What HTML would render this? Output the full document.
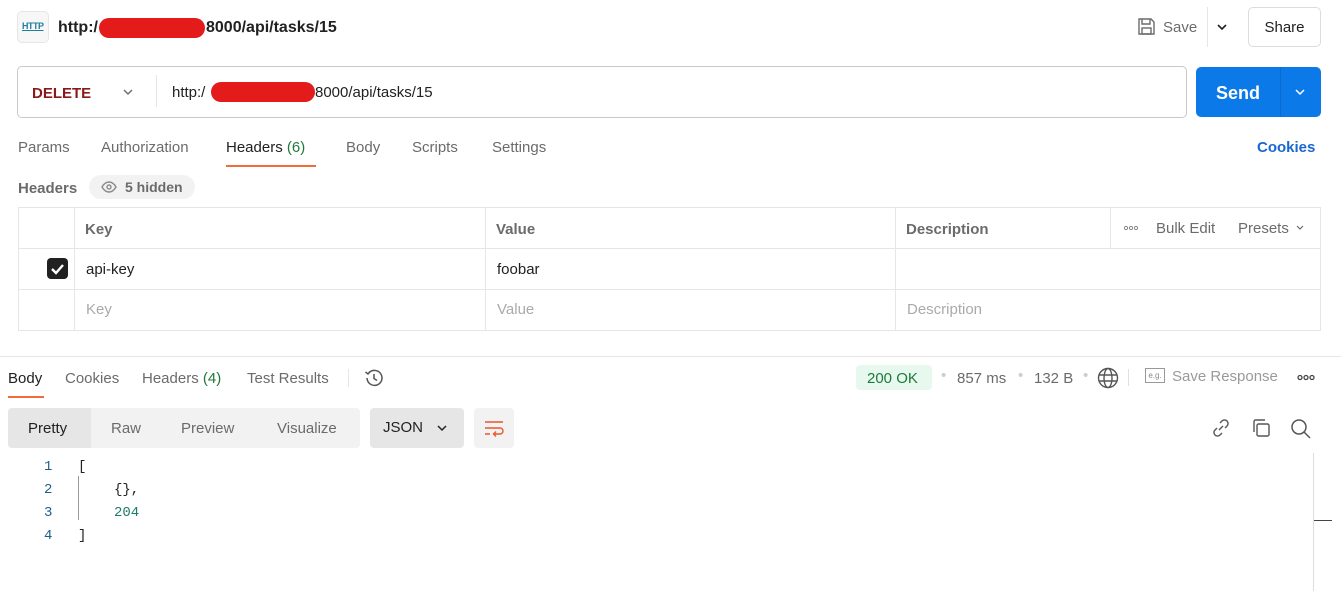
<!DOCTYPE html>
<html><head><meta charset="utf-8"><style>
*{box-sizing:border-box;margin:0;padding:0}
body{width:1341px;height:591px;background:#fff;font-family:"Liberation Sans",sans-serif;font-size:14px;color:#212121;position:relative;overflow:hidden}
.a{position:absolute;white-space:nowrap}
.g{color:#6b6b6b}
.mono{font-family:"Liberation Mono",monospace;font-size:13px}
.red{position:absolute;background:#e31b1b;border-radius:12px}
</style></head><body>
<!-- top bar -->
<div class="a" style="left:17px;top:11px;width:32px;height:32px;border:1px solid #e6e6e6;border-radius:5px;background:#f7f7f7"></div>
<div class="a" style="left:22px;top:21px;font-size:9px;font-weight:bold;color:#1f7f9e;letter-spacing:-0.5px;text-decoration:underline">HTTP</div>
<div class="a" style="left:58px;top:19px;font-size:16px;font-weight:bold">http:/</div>
<div class="a" style="left:206px;top:19px;font-size:16px;font-weight:bold">8000/api/tasks/15</div>
<div class="red" style="left:99px;top:18px;width:106px;height:20px"></div>
<svg class="a" style="left:1137px;top:17px" width="19" height="19" viewBox="0 0 19 19" fill="none" stroke="#6b6b6b" stroke-width="1.4"><path d="M2 2h12l3 3v12H2z"/><path d="M5 2v5h8V2"/><rect x="5" y="11" width="9" height="6"/></svg>
<div class="a g" style="left:1163px;top:19px;font-size:15px">Save</div>
<div class="a" style="left:1207px;top:7px;width:1px;height:40px;background:#e6e6e6"></div>
<svg class="a" style="left:1216px;top:22px" width="12" height="10" viewBox="0 0 12 10" fill="none" stroke="#212121" stroke-width="1.6"><path d="M2 3l4 4 4-4"/></svg>
<div class="a" style="left:1248px;top:7px;width:73px;height:40px;border:1px solid #dcdcdc;border-radius:5px;text-align:center;line-height:40px;font-size:15px">Share</div>
<!-- url bar -->
<div class="a" style="left:17px;top:66px;width:1170px;height:52px;border:1px solid #c8c8c8;border-radius:5px"></div>
<div class="a" style="left:32px;top:85px;font-size:15px;font-weight:bold;color:#8a1a1a">DELETE</div>
<svg class="a" style="left:122px;top:87px" width="12" height="10" viewBox="0 0 12 10" fill="none" stroke="#6b6b6b" stroke-width="1.4"><path d="M2 3l4 4 4-4"/></svg>
<div class="a" style="left:156px;top:75px;width:1px;height:32px;background:#e6e6e6"></div>
<div class="a" style="left:172px;top:84px;font-size:15px">http:/</div>
<div class="a" style="left:315px;top:84px;font-size:15px">8000/api/tasks/15</div>
<div class="red" style="left:211px;top:82px;width:104px;height:20px"></div>
<div class="a" style="left:1196px;top:67px;width:125px;height:50px;background:#0b7ae8;border-radius:5px"></div>
<div class="a" style="left:1280px;top:67px;width:1px;height:50px;background:#0a6bcc"></div>
<div class="a" style="left:1216px;top:83px;font-size:18px;font-weight:bold;color:#fff">Send</div>
<svg class="a" style="left:1294px;top:87px" width="12" height="10" viewBox="0 0 12 10" fill="none" stroke="#fff" stroke-width="1.5"><path d="M2 3l4 4 4-4"/></svg>
<!-- tabs -->
<div class="a g" style="left:18px;top:139px;font-size:15px">Params</div>
<div class="a g" style="left:101px;top:139px;font-size:15px">Authorization</div>
<div class="a" style="left:226px;top:139px;font-size:15px">Headers <span style="color:#1e7a3a">(6)</span></div>
<div class="a" style="left:226px;top:165px;width:90px;height:2px;background:#f26b3a"></div>
<div class="a g" style="left:346px;top:139px;font-size:15px">Body</div>
<div class="a g" style="left:412px;top:139px;font-size:15px">Scripts</div>
<div class="a g" style="left:492px;top:139px;font-size:15px">Settings</div>
<div class="a" style="left:1257px;top:139px;font-size:15px;font-weight:bold;color:#1a67d2">Cookies</div>
<div class="a g" style="left:18px;top:180px;font-size:15px;font-weight:bold">Headers</div>
<div class="a" style="left:89px;top:175px;width:106px;height:24px;border-radius:12px;background:#f2f2f2"></div>
<svg class="a" style="left:101px;top:181px" width="16" height="12" viewBox="0 0 16 12" fill="none" stroke="#8a8a8a" stroke-width="1.4"><path d="M1 6c2-3.5 4-5 7-5s5 1.5 7 5c-2 3.5-4 5-7 5S3 9.5 1 6z"/><circle cx="8" cy="6" r="2"/></svg>
<div class="a g" style="left:125px;top:179px;font-size:14px;font-weight:bold">5 hidden</div>
<!-- table -->
<div class="a" style="left:18px;top:207px;width:1303px;height:124px;border:1px solid #e6e6e6"></div>
<div class="a" style="left:18px;top:248px;width:1303px;height:1px;background:#e6e6e6"></div>
<div class="a" style="left:18px;top:289px;width:1303px;height:1px;background:#e6e6e6"></div>
<div class="a" style="left:74px;top:207px;width:1px;height:124px;background:#e6e6e6"></div>
<div class="a" style="left:485px;top:207px;width:1px;height:124px;background:#e6e6e6"></div>
<div class="a" style="left:895px;top:207px;width:1px;height:124px;background:#e6e6e6"></div>
<div class="a" style="left:1110px;top:207px;width:1px;height:41px;background:#e6e6e6"></div>
<div class="a g" style="left:85px;top:221px;font-weight:bold;font-size:15px">Key</div>
<div class="a g" style="left:496px;top:221px;font-weight:bold;font-size:15px">Value</div>
<div class="a g" style="left:906px;top:221px;font-weight:bold;font-size:15px">Description</div>
<svg class="a" style="left:1123px;top:225px" width="16" height="6" viewBox="0 0 16 6" fill="none" stroke="#888" stroke-width="1"><circle cx="3" cy="3" r="1.6"/><circle cx="8" cy="3" r="1.6"/><circle cx="13" cy="3" r="1.6"/></svg>
<div class="a g" style="left:1156px;top:220px;font-size:15px">Bulk Edit</div>
<div class="a g" style="left:1238px;top:220px;font-size:15px">Presets</div>
<svg class="a" style="left:1295px;top:224px" width="10" height="8" viewBox="0 0 10 8" fill="none" stroke="#6b6b6b" stroke-width="1.2"><path d="M2 2l3 3 3-3"/></svg>
<div class="a" style="left:47px;top:258px;width:21px;height:21px;background:#212121;border-radius:4px"></div>
<svg class="a" style="left:47px;top:258px" width="21" height="21" viewBox="0 0 21 21" fill="none" stroke="#fff" stroke-width="2.4"><path d="M5 11l4 4 7-8"/></svg>
<div class="a" style="left:86px;top:261px;font-size:15px">api-key</div>
<div class="a" style="left:497px;top:261px;font-size:15px">foobar</div>
<div class="a" style="left:86px;top:301px;font-size:15px;color:#aaa">Key</div>
<div class="a" style="left:497px;top:301px;font-size:15px;color:#aaa">Value</div>
<div class="a" style="left:907px;top:301px;font-size:15px;color:#aaa">Description</div>
<!-- response -->
<div class="a" style="left:0;top:356px;width:1341px;height:1px;background:#e6e6e6"></div>
<div class="a" style="left:8px;top:370px;font-size:15px">Body</div>
<div class="a" style="left:8px;top:396px;width:36px;height:2px;background:#f26b3a"></div>
<div class="a g" style="left:65px;top:370px;font-size:15px">Cookies</div>
<div class="a g" style="left:142px;top:370px;font-size:15px">Headers <span style="color:#1e7a3a">(4)</span></div>
<div class="a g" style="left:247px;top:370px;font-size:15px">Test Results</div>
<div class="a" style="left:348px;top:369px;width:1px;height:18px;background:#e6e6e6"></div>
<svg class="a" style="left:363px;top:367px" width="22" height="22" viewBox="0 0 22 22" fill="none" stroke="#555" stroke-width="1.5"><path d="M4 11a7.5 7.5 0 1 0 2-5.2"/><path d="M2.5 5l2.5 2 2-2.5"/><path d="M11 7v4.5l3 2"/></svg>
<div class="a" style="left:856px;top:365px;width:76px;height:25px;background:#e7f8ee;border-radius:4px"></div>
<div class="a" style="left:867px;top:370px;font-size:15px;color:#1e7a3a">200 OK</div>
<div class="a" style="left:941px;top:367px;color:#ccc;font-size:15px">•</div>
<div class="a g" style="left:957px;top:370px;font-size:15px">857 ms</div>
<div class="a" style="left:1018px;top:367px;color:#ccc;font-size:15px">•</div>
<div class="a g" style="left:1034px;top:370px;font-size:15px">132 B</div>
<div class="a" style="left:1083px;top:367px;color:#ccc;font-size:15px">•</div>
<svg class="a" style="left:1097px;top:367px" width="22" height="22" viewBox="0 0 22 22" fill="none" stroke="#555" stroke-width="1.4"><circle cx="11" cy="11" r="9.5"/><ellipse cx="11" cy="11" rx="4" ry="9.5"/><path d="M2 8h18M2 14h18"/></svg>
<div class="a" style="left:1128px;top:369px;width:1px;height:17px;background:#e0e0e0"></div>
<div class="a" style="left:1145px;top:368px;width:20px;height:15px;border:1px solid #999;font-size:8px;color:#888;text-align:center;line-height:13px">e.g.</div>
<div class="a" style="left:1172px;top:368px;font-size:15px;color:#9a9a9a">Save Response</div>
<svg class="a" style="left:1297px;top:374px" width="18" height="7" viewBox="0 0 18 7" fill="none" stroke="#444" stroke-width="1.3"><circle cx="3" cy="3.5" r="2"/><circle cx="9" cy="3.5" r="2"/><circle cx="15" cy="3.5" r="2"/></svg>
<!-- toolbar -->
<div class="a" style="left:8px;top:408px;width:352px;height:40px;background:#f2f2f2;border-radius:4px"></div>
<div class="a" style="left:8px;top:408px;width:83px;height:40px;background:#e6e6e6;border-radius:4px 0 0 4px"></div>
<div class="a" style="left:28px;top:420px;font-size:15px">Pretty</div>
<div class="a g" style="left:111px;top:420px;font-size:15px">Raw</div>
<div class="a g" style="left:181px;top:420px;font-size:15px">Preview</div>
<div class="a g" style="left:277px;top:420px;font-size:15px">Visualize</div>
<div class="a" style="left:370px;top:408px;width:94px;height:40px;background:#e6e6e6;border-radius:4px"></div>
<div class="a" style="left:383px;top:419px;font-size:15px">JSON</div>
<svg class="a" style="left:436px;top:423px" width="12" height="10" viewBox="0 0 12 10" fill="none" stroke="#212121" stroke-width="1.5"><path d="M2 3l4 4 4-4"/></svg>
<div class="a" style="left:474px;top:408px;width:40px;height:40px;background:#f2f2f2;border-radius:4px"></div>
<svg class="a" style="left:484px;top:418px" width="20" height="20" viewBox="0 0 20 20" fill="none" stroke="#e8582a" stroke-width="1.4"><path d="M1 4h18M1 10h15a3 3 0 0 1 0 6h-6M12 13.5l-2.5 2.5 2.5 2.5M1 16h5"/></svg>
<svg class="a" style="left:1211px;top:418px" width="20" height="20" viewBox="0 0 20 20" fill="none" stroke="#555" stroke-width="1.4"><path d="M8 12l4-4M9 5l2-2a3.5 3.5 0 0 1 5 5l-2 2M11 15l-2 2a3.5 3.5 0 0 1-5-5l2-2"/></svg>
<svg class="a" style="left:1251px;top:418px" width="20" height="20" viewBox="0 0 20 20" fill="none" stroke="#555" stroke-width="1.4"><rect x="6" y="6" width="12" height="12" rx="1.5"/><path d="M3 14V3.5A1.5 1.5 0 0 1 4.5 2H14"/></svg>
<svg class="a" style="left:1290px;top:418px" width="22" height="22" viewBox="0 0 22 22" fill="none" stroke="#555" stroke-width="1.5"><circle cx="9" cy="9" r="7"/><path d="M14 14l6 6"/></svg>
<!-- code -->
<div class="a mono" style="left:44px;top:456px;line-height:23px;color:#1f5f8b;font-size:14px">1<br>2<br>3<br>4</div>
<div class="a" style="left:78px;top:476px;width:1px;height:44px;background:#999"></div>
<div class="a mono" style="left:78px;top:456px;line-height:23px;font-size:14px">[</div>
<div class="a mono" style="left:114px;top:479px;line-height:23px;font-size:14px">{},<br><span style="color:#1e7a6a">204</span></div>
<div class="a mono" style="left:78px;top:525px;line-height:23px;font-size:14px">]</div>
<div class="a" style="left:1313px;top:453px;width:1px;height:138px;background:#ddd"></div>
<div class="a" style="left:1314px;top:520px;width:18px;height:1px;background:#444"></div>
</body></html>
